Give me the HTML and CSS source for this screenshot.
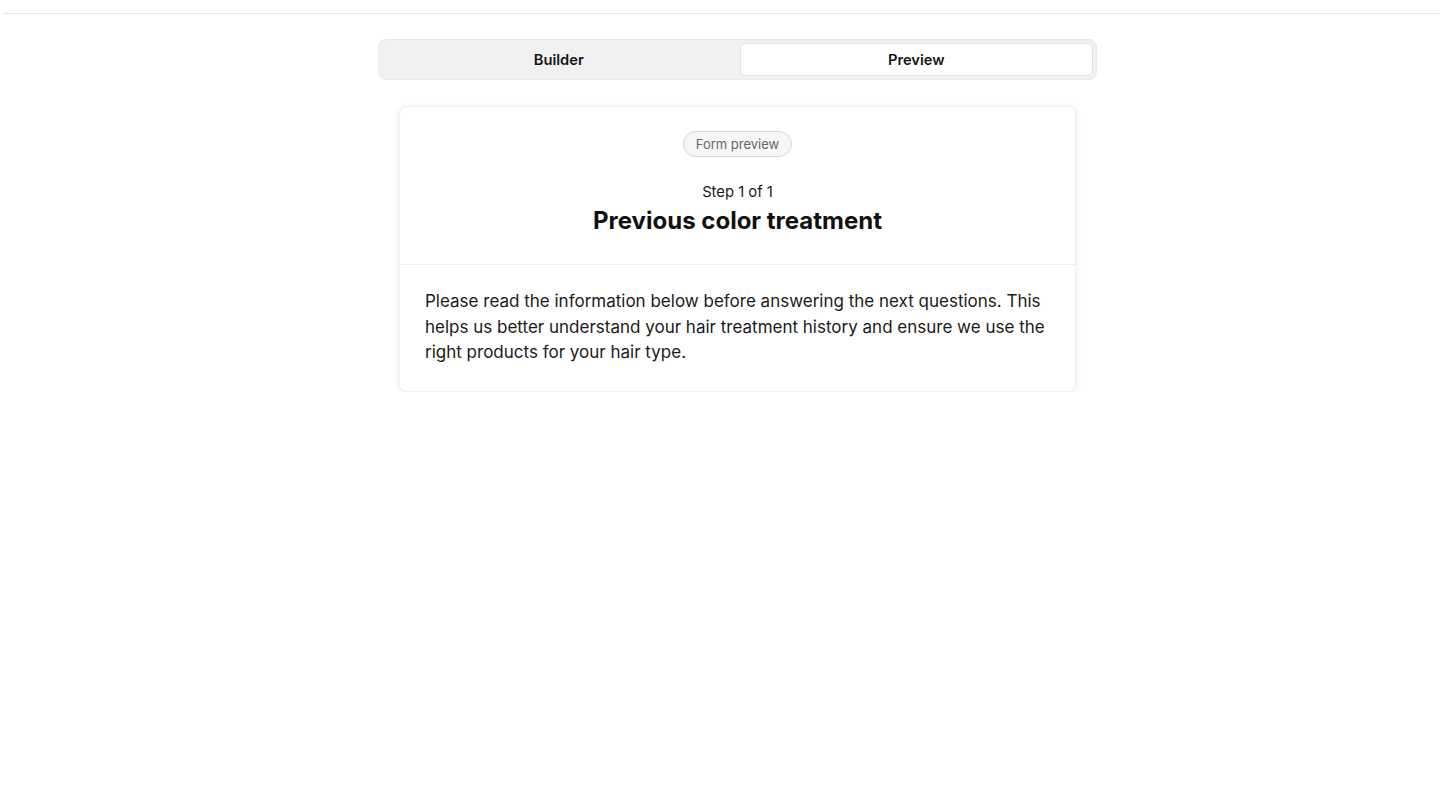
FILE: index.html
```html
<!DOCTYPE html>
<html lang="en">
<head>
<meta charset="utf-8">
<title>Form preview</title>
<link rel="stylesheet" href="styles.css">
</head>
<body>
<header class="topbar"></header>
<main class="main">
  <div class="tabs">
    <button class="tab">Builder</button>
    <button class="tab tab-active">Preview</button>
  </div>
  <section class="card">
    <div class="card-head">
      <span class="badge">Form preview</span>
      <div class="step">Step 1 of 1</div>
      <h1 class="title">Previous color treatment</h1>
    </div>
    <div class="card-body">
      <p class="desc">Please read the information below before answering the next questions. This helps us better understand your hair treatment history and ensure we use the right products for your hair type.</p>
    </div>
  </section>
</main>
</body>
</html>
```
FILE: styles.css
```css
* { box-sizing: border-box; }
html, body { margin: 0; padding: 0; background: #fff; }
body {
  font-family: Inter, "Liberation Sans", sans-serif;
  color: #111;
}
.topbar {
  height: 14px;
  margin-left: 3px;
  border-bottom: 1px solid #e6e6e6;
}
.main {
  display: flex;
  flex-direction: column;
  align-items: center;
  padding: 25px 0 0 35px;
}
.tabs {
  width: 719px;
  height: 41px;
  display: flex;
  gap: 4px;
  padding: 3px;
  background: #f1f1f1;
  border: 1px solid #e9e9e9;
  border-radius: 8px;
}
.tab {
  flex: 1;
  border: 1px solid transparent;
  background: transparent;
  border-radius: 6px;
  font-family: inherit;
  font-size: 14.7px;
  font-weight: 600;
  color: #151515;
  padding: 0;
}
.tab-active {
  background: #fff;
  border-color: #e2e2e2;
}
.card {
  width: 677px;
  margin-top: 26px;
  background: #fff;
  border-radius: 8px;
  border: 1px solid #f2f2f2;
  box-shadow: 0 1px 6px rgba(0,0,0,0.08);
}
.card-head {
  display: flex;
  flex-direction: column;
  align-items: center;
  padding: 24px 24px 26px;
  border-bottom: 1px solid #efefef;
}
.badge {
  display: inline-block;
  height: 26px;
  line-height: 24px;
  padding: 0 12px;
  border: 1px solid #d9d9d9;
  border-radius: 13px;
  background: #f6f6f6;
  color: #666;
  font-size: 13px;
}
.step {
  margin-top: 24px;
  font-size: 14.8px;
  line-height: 22px;
  color: #1a1a1a;
}
.title {
  margin: 1px 0 0;
  font-size: 24px;
  line-height: 34px;
  font-weight: 700;
  color: #111;
}
.card-body {
  padding: 24px 24px 25px 25px;
}
.desc {
  margin: 0;
  font-size: 17px;
  line-height: 25.5px;
  color: #1a1a1a;
}
```
